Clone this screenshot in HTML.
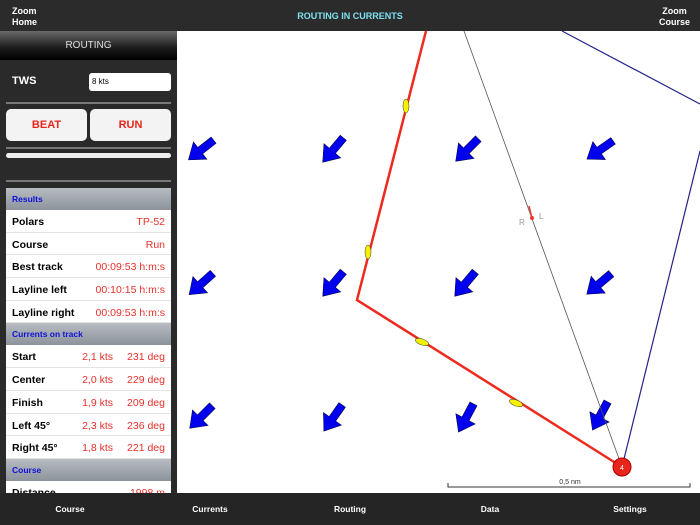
<!DOCTYPE html>
<html><head><meta charset="utf-8"><style>
*{margin:0;padding:0;box-sizing:border-box}
body{width:700px;height:525px;overflow:hidden;font-family:"Liberation Sans",sans-serif;background:#fff;position:relative}
.top{position:absolute;left:0;top:0;width:700px;height:31px;background:#2b2b2b;color:#fff;font-size:9px;font-weight:bold}
.top .l{position:absolute;left:12px;top:6px;line-height:11px}
.top .r{position:absolute;right:10px;top:6px;line-height:11px;text-align:center}
.top .c{position:absolute;left:0;width:700px;top:11px;text-align:center;color:#7ee0f0;font-size:9px}
.side{position:absolute;left:0;top:31px;width:177px;height:462px;background:#2a2a2a;overflow:hidden}
.hdr{height:29px;background:linear-gradient(#6a6a6a,#1a1a1a 60%,#000);color:#ddd;font-size:10px;text-align:center;line-height:29px}
.tws{position:absolute;left:12px;top:44px;color:#fff;font-weight:bold;font-size:11px}
.inp{position:absolute;left:89px;top:42px;width:82px;height:18px;background:#fff;border-radius:3px;font-size:8px;padding:4px 3px}
.sep{position:absolute;left:6px;width:165px;height:2px;background:#777}
.btn{position:absolute;top:78px;height:32px;width:81px;background:#f3f3f3;border-radius:5px;color:#e8251b;font-weight:bold;font-size:11px;text-align:center;line-height:32px}
.sl{position:absolute;left:6px;top:122px;width:165px;height:5px;background:#eee;border-radius:3px}
.tbl{position:absolute;left:6px;top:157px;width:165px;background:#fff}
.sh{height:22px;background:linear-gradient(#b7bcc2,#8c939b);color:#1010d8;font-weight:bold;font-size:8.5px;line-height:22px;padding-left:6px}
.rw{height:22.7px;border-bottom:1px solid #e4e4e4;font-size:10.5px;font-weight:bold;line-height:24px;padding:0 6px;position:relative}
.rw span{position:absolute;right:6px;color:#e8302a;font-weight:normal}
.rw span.a{right:58px}
.bot{position:absolute;left:0;top:493px;width:700px;height:32px;background:#252525;color:#fff;font-size:8.5px;font-weight:bold}
.bot div{position:absolute;top:11px;width:80px;text-align:center}
</style></head><body>
<div class="top"><div class="l">Zoom<br>Home</div><div class="c">ROUTING IN CURRENTS</div><div class="r">Zoom<br>Course</div></div>
<svg style="position:absolute;left:0;top:0" width="700" height="525">
<defs><polygon id="ar" points="0,-4 17,-4 17,-11 32,0 17,11 17,4 0,4" transform="translate(-16,0)" fill="#0000ee" stroke="#000033" stroke-width=".5"/></defs>
<g>
<use href="#ar" transform="translate(201,150) rotate(142)"/>
<use href="#ar" transform="translate(333,150) rotate(130)"/>
<use href="#ar" transform="translate(467,150) rotate(135)"/>
<use href="#ar" transform="translate(600,150) rotate(145)"/>
<use href="#ar" transform="translate(201,284) rotate(138)"/>
<use href="#ar" transform="translate(333,284) rotate(130)"/>
<use href="#ar" transform="translate(465,284) rotate(130)"/>
<use href="#ar" transform="translate(599,284) rotate(140)"/>
<use href="#ar" transform="translate(201,417) rotate(135)"/>
<use href="#ar" transform="translate(333,418) rotate(125)"/>
<use href="#ar" transform="translate(466,418) rotate(118)"/>
<use href="#ar" transform="translate(600,416) rotate(118)"/>
</g>
<line x1="464" y1="31" x2="622" y2="467" stroke="#555" stroke-width="0.8"/>
<line x1="562" y1="31" x2="700" y2="104" stroke="#222288" stroke-width="1.2"/>
<line x1="622" y1="467" x2="700" y2="151" stroke="#222288" stroke-width="1.2"/>
<polyline points="426,31 357,300 622,467" fill="none" stroke="#ee2a1e" stroke-width="2.5"/>
<line x1="532" y1="218" x2="529" y2="206" stroke="#e33" stroke-width="1.5"/>
<circle cx="532" cy="218" r="2" fill="#e33"/>
<text x="519" y="225" font-size="8" fill="#999">R</text><text x="539" y="219" font-size="8" fill="#999">L</text>
<ellipse cx="406" cy="106" rx="3" ry="7" fill="#f4f000" stroke="#333" stroke-width=".5"/>
<ellipse cx="368" cy="252" rx="3" ry="7" fill="#f4f000" stroke="#333" stroke-width=".5"/>
<ellipse cx="422" cy="342" rx="7" ry="3" transform="rotate(20 422 342)" fill="#f4f000" stroke="#333" stroke-width=".5"/>
<ellipse cx="516" cy="403" rx="7" ry="3" transform="rotate(20 516 403)" fill="#f4f000" stroke="#333" stroke-width=".5"/>
<circle cx="622" cy="467" r="9" fill="#e8251b" stroke="#a00" stroke-width="1"/>
<text x="622" y="470" font-size="7" fill="#fff" text-anchor="middle">4</text>
<polyline points="448,483 448,487 690,487 690,483" fill="none" stroke="#333" stroke-width="1"/>
<text x="570" y="484" font-size="7" fill="#333" text-anchor="middle">0,5 nm</text>
</svg>
<div class="side">
<div class="hdr">ROUTING</div>
<div class="tws">TWS</div><div class="inp">8 kts</div>
<div class="sep" style="top:71px"></div>
<div class="btn" style="left:6px">BEAT</div><div class="btn" style="left:90px">RUN</div>
<div class="sep" style="top:116px"></div>
<div class="sl"></div>
<div class="sep" style="top:149px"></div>
<div class="tbl">
<div class="sh">Results</div>
<div class="rw">Polars<span>TP-52</span></div>
<div class="rw">Course<span>Run</span></div>
<div class="rw">Best track<span>00:09:53 h:m:s</span></div>
<div class="rw">Layline left<span>00:10:15 h:m:s</span></div>
<div class="rw">Layline right<span>00:09:53 h:m:s</span></div>
<div class="sh">Currents on track</div>
<div class="rw">Start<span class="a">2,1 kts</span><span>231 deg</span></div>
<div class="rw">Center<span class="a">2,0 kts</span><span>229 deg</span></div>
<div class="rw">Finish<span class="a">1,9 kts</span><span>209 deg</span></div>
<div class="rw">Left 45°<span class="a">2,3 kts</span><span>236 deg</span></div>
<div class="rw">Right 45°<span class="a">1,8 kts</span><span>221 deg</span></div>
<div class="sh">Course</div>
<div class="rw">Distance<span>1998 m</span></div>
</div>
</div>
<div class="bot"><div style="left:30px">Course</div><div style="left:170px">Currents</div><div style="left:310px">Routing</div><div style="left:450px">Data</div><div style="left:590px">Settings</div></div>
</body></html>
